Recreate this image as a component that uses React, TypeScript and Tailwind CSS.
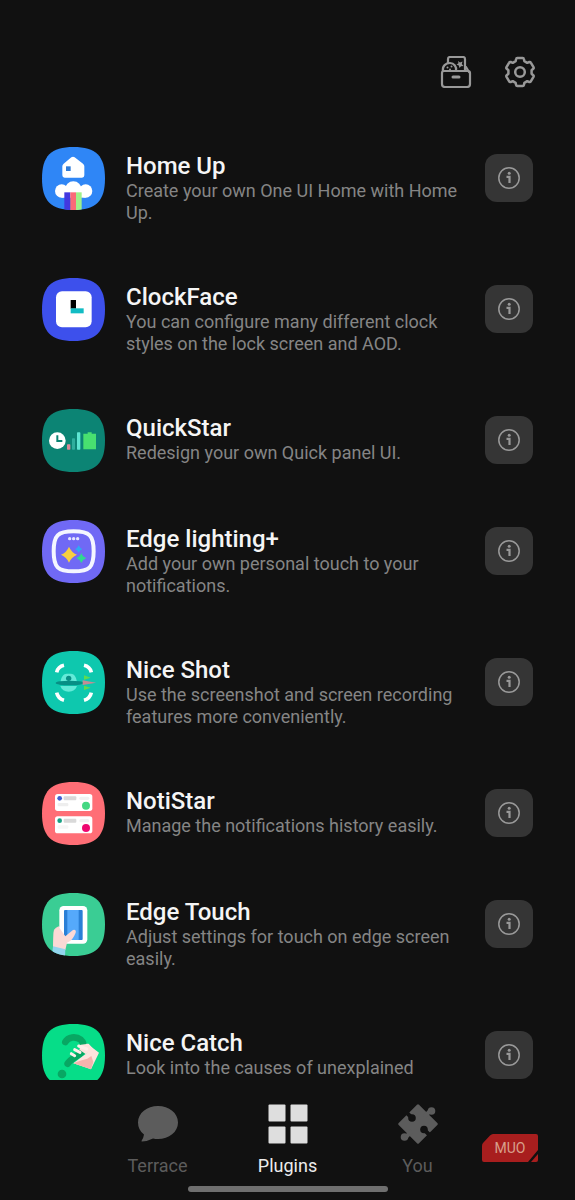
import type { ReactNode } from "react";

const SQUIRCLE =
  "M94.500 0C162 0 189 27 189 94.500S162 189 94.500 189 0 162 0 94.500 27 0 94.500 0Z";

function AppIcon({ id, color, children }: { id: string; color: string; children: ReactNode }) {
  return (
    <svg viewBox="0 0 189 189" className="size-[63px] shrink-0" aria-hidden="true">
      <clipPath id={id}>
        <path d={SQUIRCLE} />
      </clipPath>
      <g clipPath={`url(#${id})`}>
        <rect width="189" height="189" fill={color} />
        {children}
      </g>
    </svg>
  );
}

function HomeUpIcon() {
  return (
    <AppIcon id="home-up" color="#2f86f6">
      <path
        d="M88 31q5-4 10 0l25 19q4 3 4 8v27q0 7-7 7H68q-7 0-7-7V58q0-5 4-8Z"
        fill="#fff"
      />
      <rect x="72" y="58" width="14" height="14" fill="#2f7bd8" />
      <g fill="#fff">
        <circle cx="59" cy="132" r="20" />
        <circle cx="94" cy="128" r="25" />
        <circle cx="131" cy="132" r="20" />
        <rect x="59" y="136" width="72" height="16" />
      </g>
      <rect x="67" y="136" width="18" height="60" fill="#4238e0" />
      <rect x="85" y="136" width="17" height="60" fill="#fa6a78" />
      <rect x="102" y="136" width="17" height="60" fill="#9ff08a" />
    </AppIcon>
  );
}

function ClockFaceIcon() {
  return (
    <AppIcon id="clock-face" color="#3d50ec">
      <rect x="42" y="40" width="107" height="108" rx="18" fill="#fff" />
      <rect x="86" y="66" width="16" height="26" fill="#000" />
      <rect x="86" y="91" width="39" height="15" fill="#12bcc4" />
    </AppIcon>
  );
}

function QuickStarIcon() {
  return (
    <AppIcon id="quick-star" color="#0c8474">
      <circle cx="46" cy="95" r="25" fill="#fff" />
      <path d="M46 79v17h15" fill="none" stroke="#0c8474" strokeWidth="6" />
      <rect x="75" y="106" width="10" height="16" rx="2" fill="#d88a98" />
      <rect x="90" y="88" width="9" height="34" rx="2" fill="#2fae9c" />
      <rect x="105" y="70" width="10" height="52" rx="2" fill="#5fe6d2" />
      <path d="M124 74h13v-4h12v4h13v47h-38Z" fill="#48e070" />
    </AppIcon>
  );
}

function EdgeLightingIcon() {
  return (
    <AppIcon id="edge-lighting" color="#7069f5">
      <path
        d="M95 34c48 0 60 12 60 60s-12 60-60 60-60-12-60-60 12-60 60-60Z"
        fill="none"
        stroke="#f4f6ff"
        strokeWidth="12"
      />
      <g fill="#e4e4ff">
        <circle cx="83" cy="56" r="5" />
        <circle cx="95" cy="56" r="5" />
        <circle cx="107" cy="56" r="5" />
      </g>
      <path d="M81 80q7 17 24 24-17 7-24 24-7-17-24-24 17-7 24-24Z" fill="#f8cf40" />
      <path d="M110 76q3 8 11 11-8 3-11 11-3-8-11-11 8-3 11-11Z" fill="#2fa8f4" />
      <path d="M118 99q4 12 15 15-11 4-15 15-4-11-15-15 11-3 15-15Z" fill="#30d890" />
    </AppIcon>
  );
}

function NiceShotIcon() {
  return (
    <AppIcon id="nice-shot" color="#0ec8ae">
      <path
        d="M44 64q4-17 22-21M126 43q18 4 22 21M44 125q4 18 22 23M126 148q18-5 22-23"
        fill="none"
        stroke="#fff"
        strokeWidth="11"
      />
      <path d="M55 95c2-18 10-27 19-27h13c9 0 16 9 18 27Z" fill="#63ead8" />
      <path d="M55 105h50c-4 11-12 17-25 17s-21-6-25-17Z" fill="#63ead8" />
      <ellipse cx="83" cy="96" rx="42" ry="7" fill="#078f85" />
      <circle cx="80" cy="82" r="8" fill="#098f86" />
      <path d="M126 73l20 7-20 6Z" fill="#5fdc4e" />
      <path d="M126 104l20 6-20 7Z" fill="#5fdc4e" />
      <path d="M122 88l40 7-40 7Z" fill="#c58c94" />
    </AppIcon>
  );
}

function NotiStarIcon() {
  return (
    <AppIcon id="noti-star" color="#ff6e76">
      <rect x="39" y="36" width="112" height="51" rx="8" fill="#fff" />
      <circle cx="53" cy="49" r="7" fill="#3f5fd0" />
      <rect x="65" y="43" width="38" height="12" rx="3" fill="#d9d9d9" />
      <rect x="112" y="44" width="30" height="10" rx="5" fill="#f1f1f1" />
      <rect x="47" y="63" width="32" height="10" rx="3" fill="#eeeeee" />
      <circle cx="132" cy="71" r="12" fill="#45d883" />
      <rect x="39" y="103" width="112" height="51" rx="8" fill="#fff" />
      <circle cx="53" cy="116" r="7" fill="#18a184" />
      <rect x="65" y="110" width="38" height="12" rx="3" fill="#d9d9d9" />
      <rect x="112" y="111" width="30" height="10" rx="5" fill="#f1f1f1" />
      <rect x="47" y="130" width="32" height="10" rx="3" fill="#f6f6f6" />
      <circle cx="132" cy="138" r="12" fill="#ee0870" />
    </AppIcon>
  );
}

function EdgeTouchIcon() {
  return (
    <AppIcon id="edge-touch" color="#3acd94">
      <path d="M35 114q4-11 16-14l18 18v48H33Z" fill="#f9d2d0" />
      <rect x="52" y="39" width="84" height="113" rx="13" fill="#fff" />
      <rect x="66" y="51" width="56" height="90" rx="3" fill="#2a7fd6" />
      <rect x="76" y="51" width="34" height="90" fill="#55a9fb" />
      <path
        d="M52 104c-10-1-16 6-17 17l-2 42 37 8 5-22c12-4 21-17 26-30 3-8-5-12-11-6l-20 17Z"
        fill="#fbd9d5"
      />
      <path d="M33 160l37 9-1 24H29Z" fill="#93d5ee" />
    </AppIcon>
  );
}

function NiceCatchIcon() {
  return (
    <AppIcon id="nice-catch" color="#06dd88">
      <path
        d="M70 54c8-16 32-18 46-7 14 13 10 34-4 44-12 8-26 14-35 28"
        fill="none"
        stroke="#08a763"
        strokeWidth="20"
        strokeLinecap="round"
      />
      <circle cx="60" cy="150" r="13" fill="#08a763" />
      <path d="M134 58l37 28-24 50-53-18 42-32Z" fill="#fde3dd" />
      <path d="M94 118l20-8 22-6 12-8 6 18-7 22Z" fill="#f5b4ae" />
      <path d="M116 62l24-3 12 14-20 18-20-14Z" fill="#fde3dd" />
      <path
        d="M88 89l10 6M98 77l16 8M110 66l24 9"
        stroke="#fdeee9"
        strokeWidth="9"
        strokeLinecap="round"
      />
    </AppIcon>
  );
}

const plugins = [
  {
    name: "Home Up",
    description: "Create your own One UI Home with Home Up.",
    Icon: HomeUpIcon,
  },
  {
    name: "ClockFace",
    description: "You can configure many different clock styles on the lock screen and AOD.",
    Icon: ClockFaceIcon,
  },
  {
    name: "QuickStar",
    description: "Redesign your own Quick panel UI.",
    Icon: QuickStarIcon,
  },
  {
    name: "Edge lighting+",
    description: "Add your own personal touch to your notifications.",
    Icon: EdgeLightingIcon,
  },
  {
    name: "Nice Shot",
    description: "Use the screenshot and screen recording features more conveniently.",
    Icon: NiceShotIcon,
  },
  {
    name: "NotiStar",
    description: "Manage the notifications history easily.",
    Icon: NotiStarIcon,
  },
  {
    name: "Edge Touch",
    description: "Adjust settings for touch on edge screen easily.",
    Icon: EdgeTouchIcon,
  },
  {
    name: "Nice Catch",
    description: "Look into the causes of unexplained",
    Icon: NiceCatchIcon,
  },
];

function Header() {
  return (
    <header className="flex shrink-0 justify-end gap-8 px-[39px] pt-14 pb-[59px] text-[#999]">
      <button type="button" aria-label="Sticker box">
        <svg
          viewBox="0 0 32 32"
          className="size-8"
          fill="none"
          stroke="currentColor"
          strokeWidth="2.200"
          strokeLinejoin="round"
          strokeLinecap="round"
        >
          <path d="M4 15h24q2 0 2 2v11q0 3-3 3H5q-3 0-3-3V17q0-2 2-2Z" />
          <path d="M8 7V3q0-2 2-2h13q2 0 2 2v11M26 11l3 5" />
          <path d="M3 15c-1-5 3-8 7-8s7 4 6 8" />
          <path d="M13 21h6" strokeWidth="3" />
          <path
            d="M18 5l2 1.500 2.500-1-.7 2.500 1.700 2-2.500.2L19.500 12l-.7-2.500-2.300-1 2-1.300Z"
            fill="currentColor"
            strokeWidth="0"
          />
          <g fill="currentColor" stroke="none">
            <circle cx="7.500" cy="11.500" r="1" />
            <circle cx="11.500" cy="10.500" r="1" />
            <circle cx="10" cy="13.500" r="1" />
          </g>
        </svg>
      </button>
      <button type="button" aria-label="Settings">
        <svg
          viewBox="0 0 32 32"
          className="size-8"
          fill="none"
          stroke="currentColor"
          strokeWidth="2.500"
          strokeLinejoin="round"
        >
          <path d="M13.300 2h5.400q1 0 1.200 1l.5 2.200 2.800 1.600 2.100-.8q1-.3 1.500.6l2.700 4.600q.5.900-.3 1.600l-1.600 1.400v3.600l1.600 1.400q.8.700.3 1.600l-2.700 4.600q-.5.900-1.500.6l-2.100-.8-2.800 1.600-.5 2.200q-.2 1-1.200 1h-5.400q-1 0-1.200-1l-.5-2.200-2.800-1.600-2.100.8q-1 .3-1.500-.6l-2.700-4.600q-.5-.9.3-1.600l1.600-1.400v-3.600l-1.600-1.400q-.8-.7-.3-1.600l2.700-4.600q.5-.9 1.500-.6l2.100.8 2.800-1.600.5-2.200q.2-1 1.200-1Z" />
          <circle cx="16" cy="16" r="4.800" />
        </svg>
      </button>
    </header>
  );
}

function PluginRow({ name, description, Icon }: (typeof plugins)[number]) {
  return (
    <li className="flex items-start gap-[21px]">
      <Icon />
      <div className="min-w-0 flex-1 py-1.5">
        <h2 className="text-2xl leading-[27px] font-medium text-[#f5f5f5]">{name}</h2>
        <p className="text-lg leading-[22px] text-[#858585]">{description}</p>
      </div>
      <button
        type="button"
        aria-label={`About ${name}`}
        className="mt-[7px] flex size-12 shrink-0 items-center justify-center rounded-xl bg-[#353535] text-[#999]"
      >
        <svg viewBox="0 0 24 24" className="size-6" fill="none" stroke="currentColor">
          <circle cx="12" cy="12" r="10.200" strokeWidth="1.500" />
          <path d="M9.500 10.800H12.500V17" strokeWidth="2.200" />
          <circle cx="12.200" cy="7.300" r="1.500" fill="currentColor" stroke="none" />
        </svg>
      </button>
    </li>
  );
}

function PuzzleIcon() {
  return (
    <svg viewBox="0 0 40 40" className="size-10" aria-hidden="true">
      <mask id="puzzle-notches" maskUnits="userSpaceOnUse" x="0" y="0" width="40" height="40">
        <rect width="40" height="40" fill="#fff" />
        <circle cx="14" cy="14" r="3.800" fill="#000" />
        <circle cx="26" cy="25.500" r="3.800" fill="#000" />
        <path d="M14 14L7 7M26 25.500l7 7" stroke="#000" strokeWidth="4" />
      </mask>
      <g fill="currentColor">
        <g mask="url(#puzzle-notches)">
          <path d="M19 .700q1-1 2 0L39.300 19q1 1 0 2L21 39.300q-1 1-2 0L.700 21q-1-1 0-2Z" />
        </g>
        <circle cx="33.500" cy="7" r="3.800" />
        <circle cx="6.500" cy="33" r="3.800" />
        <path d="M33 6L26 13M7 34l7-7" stroke="currentColor" strokeWidth="4" />
      </g>
    </svg>
  );
}

function TabBar() {
  return (
    <footer className="relative shrink-0 pt-6 pb-2">
      <nav className="flex justify-center text-lg leading-6 text-[#5c5c5c]">
        <a href="#terrace" className="flex w-[130px] flex-col items-center gap-[10px]">
          <svg viewBox="0 0 40 40" className="size-10" fill="currentColor" aria-hidden="true">
            <path d="M20 2c11 0 20 7 20 16.500S31 35 20 35q-2.500 0-5-.6Q10 37 4 37.500q-1-.2-.3-1Q5.500 34 6 30.500 0 26 0 18.500C0 9 9 2 20 2Z" />
          </svg>
          Terrace
        </a>
        <a
          href="#plugins"
          aria-current="page"
          className="flex w-[130px] flex-col items-center gap-[10px] text-[#ececec]"
        >
          <svg viewBox="0 0 40 40" className="size-10" fill="#dedede" aria-hidden="true">
            <rect x="0.500" y="0.500" width="17" height="17" rx="1" />
            <rect x="22.500" y="0.500" width="17" height="17" rx="1" />
            <rect x="0.500" y="22.500" width="17" height="17" rx="1" />
            <rect x="22.500" y="22.500" width="17" height="17" rx="1" />
          </svg>
          Plugins
        </a>
        <a href="#you" className="flex w-[130px] flex-col items-center gap-[10px]">
          <PuzzleIcon />
          You
        </a>
      </nav>
      <div className="mx-auto mt-2 h-1.5 w-[200px] rounded-full bg-[#6f6f6f]" />
      <div className="absolute right-[37px] bottom-[38px] flex h-7 w-14 items-center justify-center">
        <svg viewBox="0 0 56 28" className="absolute inset-0" fill="#a81e1e" aria-hidden="true">
          <path d="M11 0h43q2 0 2 2v14L46 28H2q-2 0-2-2V12q0-2 1-3l7-7.500Q9.500 0 11 0Z" />
          <path d="M56 20v6q0 2-2 2h-5Z" />
        </svg>
        <span className="relative text-sm font-normal text-[#d8a08c]">MUO</span>
      </div>
    </footer>
  );
}

export default function App() {
  return (
    <div className="flex h-screen flex-col bg-[#111] font-[Roboto,sans-serif]">
      <Header />
      <main className="min-h-0 flex-1 overflow-y-auto px-[42px] [scrollbar-width:none]">
        <ul className="flex flex-col gap-12">
          {plugins.map((plugin) => (
            <PluginRow key={plugin.name} {...plugin} />
          ))}
        </ul>
      </main>
      <TabBar />
    </div>
  );
}
